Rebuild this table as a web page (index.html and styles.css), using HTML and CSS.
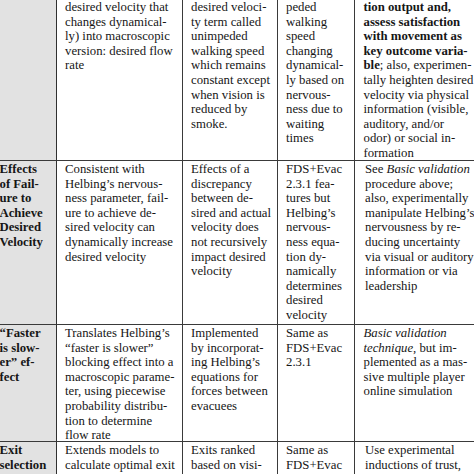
FILE: index.html
```html
<!DOCTYPE html>
<html>
<head>
<meta charset="utf-8">
<link rel="stylesheet" href="styles.css">
</head>
<body>
<div class="table">
  <div class="cell head"></div>
  <div class="cell">desired velocity that<br>changes dynamical-<br>ly) into macroscopic<br>version: desired flow<br>rate</div>
  <div class="cell">desired veloci-<br>ty term called<br>unimpeded<br>walking speed<br>which remains<br>constant except<br>when vision is<br>reduced by<br>smoke.</div>
  <div class="cell">peded<br>walking<br>speed<br>changing<br>dynamical-<br>ly based on<br>nervous-<br>ness due to<br>waiting<br>times</div>
  <div class="cell last"><b>tion output and,<br>assess satisfaction<br>with movement as<br>key outcome varia-<br>ble</b>; also, experimen-<br>tally heighten desired<br>velocity via physical<br>information (visible,<br>auditory, and/or<br>odor) or social in-<br>formation</div>

  <div class="cell head">Effects<br>of Fail-<br>ure to<br>Achieve<br>Desired<br>Velocity</div>
  <div class="cell">Consistent with<br>Helbing’s nervous-<br>ness parameter, fail-<br>ure to achieve de-<br>sired velocity can<br>dynamically increase<br>desired velocity</div>
  <div class="cell">Effects of a<br>discrepancy<br>between de-<br>sired and actual<br>velocity does<br>not recursively<br>impact desired<br>velocity</div>
  <div class="cell">FDS+Evac<br>2.3.1 fea-<br>tures but<br>Helbing’s<br>nervous-<br>ness equa-<br>tion dy-<br>namically<br>determines<br>desired<br>velocity</div>
  <div class="cell last indent">See <i>Basic validation</i><br>procedure above;<br>also, experimentally<br>manipulate Helbing’s<br>nervousness by re-<br>ducing uncertainty<br>via visual or auditory<br>information or via<br>leadership</div>

  <div class="cell head">“Faster<br>is slow-<br>er” ef-<br>fect</div>
  <div class="cell">Translates Helbing’s<br>“faster is slower”<br>blocking effect into a<br>macroscopic parame-<br>ter, using piecewise<br>probability distribu-<br>tion to determine<br>flow rate</div>
  <div class="cell">Implemented<br>by incorporat-<br>ing Helbing’s<br>equations for<br>forces between<br>evacuees</div>
  <div class="cell">Same as<br>FDS+Evac<br>2.3.1</div>
  <div class="cell last"><i>Basic validation<br>technique</i>, but im-<br>plemented as a mas-<br>sive multiple player<br>online simulation</div>

  <div class="cell head">Exit<br>selection</div>
  <div class="cell">Extends models to<br>calculate optimal exit</div>
  <div class="cell">Exits ranked<br>based on visi-</div>
  <div class="cell">Same as<br>FDS+Evac</div>
  <div class="cell last indent">Use experimental<br>inductions of trust,</div>
</div>
</body>
</html>
```

FILE: styles.css
```css
html, body {
  margin: 0;
  padding: 0;
  background: #ffffff;
  overflow: hidden;
}

.table {
  display: grid;
  grid-template-columns: 66px 126px 95px 77px 150px;
  grid-template-rows: 162px 164px 117px 80px;
  margin-top: -1px;
  margin-left: -9px;
  font-family: "Liberation Serif", "Times New Roman", serif;
  font-size: 12.75px;
  line-height: 14.6px;
  color: #161616;
  white-space: nowrap;
}

.cell {
  box-sizing: border-box;
  padding: 1px 4px 0 8px;
  border-right: 1px solid #3a3a3a;
  border-bottom: 1px solid #3a3a3a;
  overflow: hidden;
}

.head {
  background: #e2e2e2;
  font-weight: bold;
  padding-left: 8.5px;
  border-right: 1.5px solid #303030;
}

.last {
  border-right: none;
  padding-left: 8.5px;
}

.indent {
  padding-left: 10px;
}
```
